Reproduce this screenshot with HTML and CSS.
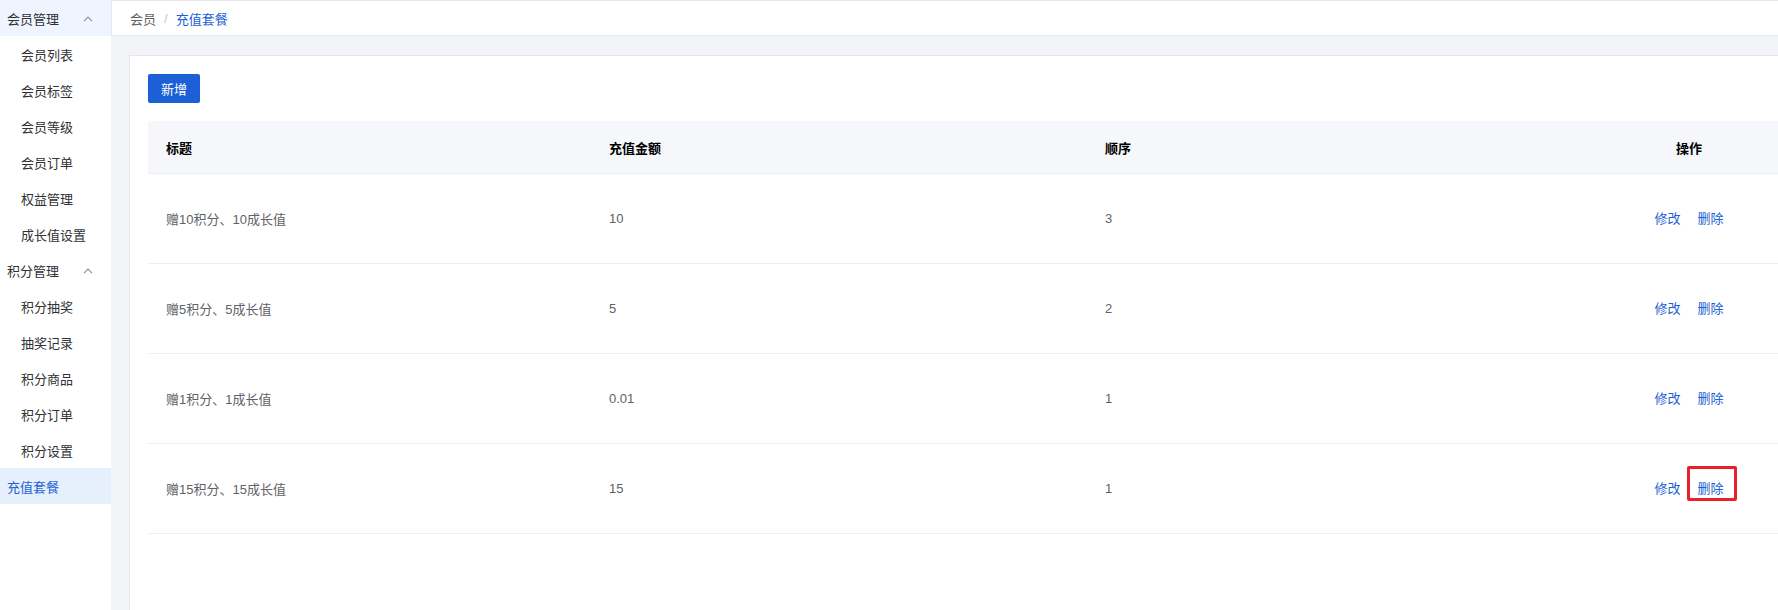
FILE: index.html
```html
<!DOCTYPE html>
<html lang="zh-CN">
<head>
<meta charset="utf-8">
<title>充值套餐</title>
<link rel="stylesheet" href="styles.css">
</head>
<body>
<aside class="sidebar">
  <div class="group open">
    <span>会员管理</span>
    <svg class="chev" width="10" height="6" viewBox="0 0 10 6"><path d="M1 5.2 5 1.2 9 5.2" fill="none" stroke="#909399" stroke-width="1.2"/></svg>
  </div>
  <div class="item">会员列表</div>
  <div class="item">会员标签</div>
  <div class="item">会员等级</div>
  <div class="item">会员订单</div>
  <div class="item">权益管理</div>
  <div class="item">成长值设置</div>
  <div class="group">
    <span>积分管理</span>
    <svg class="chev" width="10" height="6" viewBox="0 0 10 6"><path d="M1 5.2 5 1.2 9 5.2" fill="none" stroke="#909399" stroke-width="1.2"/></svg>
  </div>
  <div class="item">积分抽奖</div>
  <div class="item">抽奖记录</div>
  <div class="item">积分商品</div>
  <div class="item">积分订单</div>
  <div class="item">积分设置</div>
  <div class="group active">充值套餐</div>
</aside>

<main class="main">
  <nav class="crumbs">
    <span class="crumb">会员</span>
    <span class="sep">/</span>
    <span class="crumb current">充值套餐</span>
  </nav>

  <section class="content">
    <div class="card">
      <button class="btn-primary">新增</button>

      <div class="table">
        <div class="row head">
          <div class="cell">标题</div>
          <div class="cell">充值金额</div>
          <div class="cell">顺序</div>
          <div class="cell center">操作</div>
        </div>
        <div class="row">
          <div class="cell">赠10积分、10成长值</div>
          <div class="cell">10</div>
          <div class="cell">3</div>
          <div class="cell center"><a class="link">修改</a><a class="link">删除</a></div>
        </div>
        <div class="row">
          <div class="cell">赠5积分、5成长值</div>
          <div class="cell">5</div>
          <div class="cell">2</div>
          <div class="cell center"><a class="link">修改</a><a class="link">删除</a></div>
        </div>
        <div class="row">
          <div class="cell">赠1积分、1成长值</div>
          <div class="cell">0.01</div>
          <div class="cell">1</div>
          <div class="cell center"><a class="link">修改</a><a class="link">删除</a></div>
        </div>
        <div class="row">
          <div class="cell">赠15积分、15成长值</div>
          <div class="cell">15</div>
          <div class="cell">1</div>
          <div class="cell center"><a class="link">修改</a><a class="link flagged">删除<span class="flag"></span></a></div>
        </div>
      </div>
    </div>
  </section>
</main>
</body>
</html>
```

FILE: styles.css
```css
* {
  box-sizing: border-box;
}

html, body {
  height: 100%;
}

body {
  margin: 0;
  display: flex;
  overflow: hidden;
  font-family: "Liberation Sans", "Noto Sans CJK SC", sans-serif;
  font-size: 13px;
  color: #303133;
  background: #ffffff;
}

/* ---------- side menu ---------- */
.sidebar {
  width: 111px;
  flex: none;
  background: #ffffff;
}

.group,
.item {
  height: 36px;
  display: flex;
  align-items: center;
  white-space: nowrap;
}

.group {
  padding-left: 7px;
  color: #303133;
}

.group.open:first-child {
  background: #eef5ff;
}

.group .chev {
  margin-left: 24px;
  margin-top: 1px;
}

.group.active {
  background: #e6effc;
  color: #1c5fd6;
}

.item {
  padding-left: 21px;
  color: #303133;
}

/* ---------- main area ---------- */
.main {
  flex: 1;
  min-width: 0;
  background: #f3f4f8;
  display: flex;
  flex-direction: column;
}

.crumbs {
  height: 36px;
  flex: none;
  display: flex;
  align-items: center;
  padding-left: 18px;
  background: #ffffff;
  border: 1px solid #e4e7ed;
  border-right: none;
  color: #606266;
}

.crumbs .sep {
  color: #c0c4cc;
  margin: 0 8px;
}

.crumbs .current {
  color: #1c5fd6;
}

.content {
  flex: 1;
  padding: 19px 0 0 18px;
}

.card {
  width: 1680px;
  height: 100%;
  background: #ffffff;
  border: 1px solid #e4e7ed;
  border-bottom: none;
  padding: 18px 18px 0 18px;
}

.btn-primary {
  display: block;
  width: 52px;
  height: 29px;
  padding: 0;
  border: none;
  border-radius: 2px;
  background: #1c5fd6;
  color: #ffffff;
  font: inherit;
  font-size: 13px;
  cursor: pointer;
}

/* ---------- table ---------- */
.table {
  margin-top: 18px;
}

.row {
  display: grid;
  grid-template-columns: 443px 496px 1fr 202px;
  height: 90px;
  border-bottom: 1px solid #ebeef5;
  align-items: center;
  color: #606266;
}

.row.head {
  height: 53px;
  background: #f5f7fa;
  color: #000000;
  font-weight: 700;
}

.cell {
  padding-left: 18px;
  white-space: nowrap;
}

.cell.center {
  padding-left: 0;
  text-align: center;
}

.link {
  position: relative;
  display: inline-block;
  line-height: 18px;
  color: #1c5fd6;
  cursor: pointer;
}

.link + .link {
  margin-left: 17px;
}

/* red highlight frame around a single action */
.flag {
  position: absolute;
  left: -11px;
  top: -14px;
  width: 50px;
  height: 35px;
  border: 3px solid #e8202a;
  border-radius: 2px;
  pointer-events: none;
}
```
